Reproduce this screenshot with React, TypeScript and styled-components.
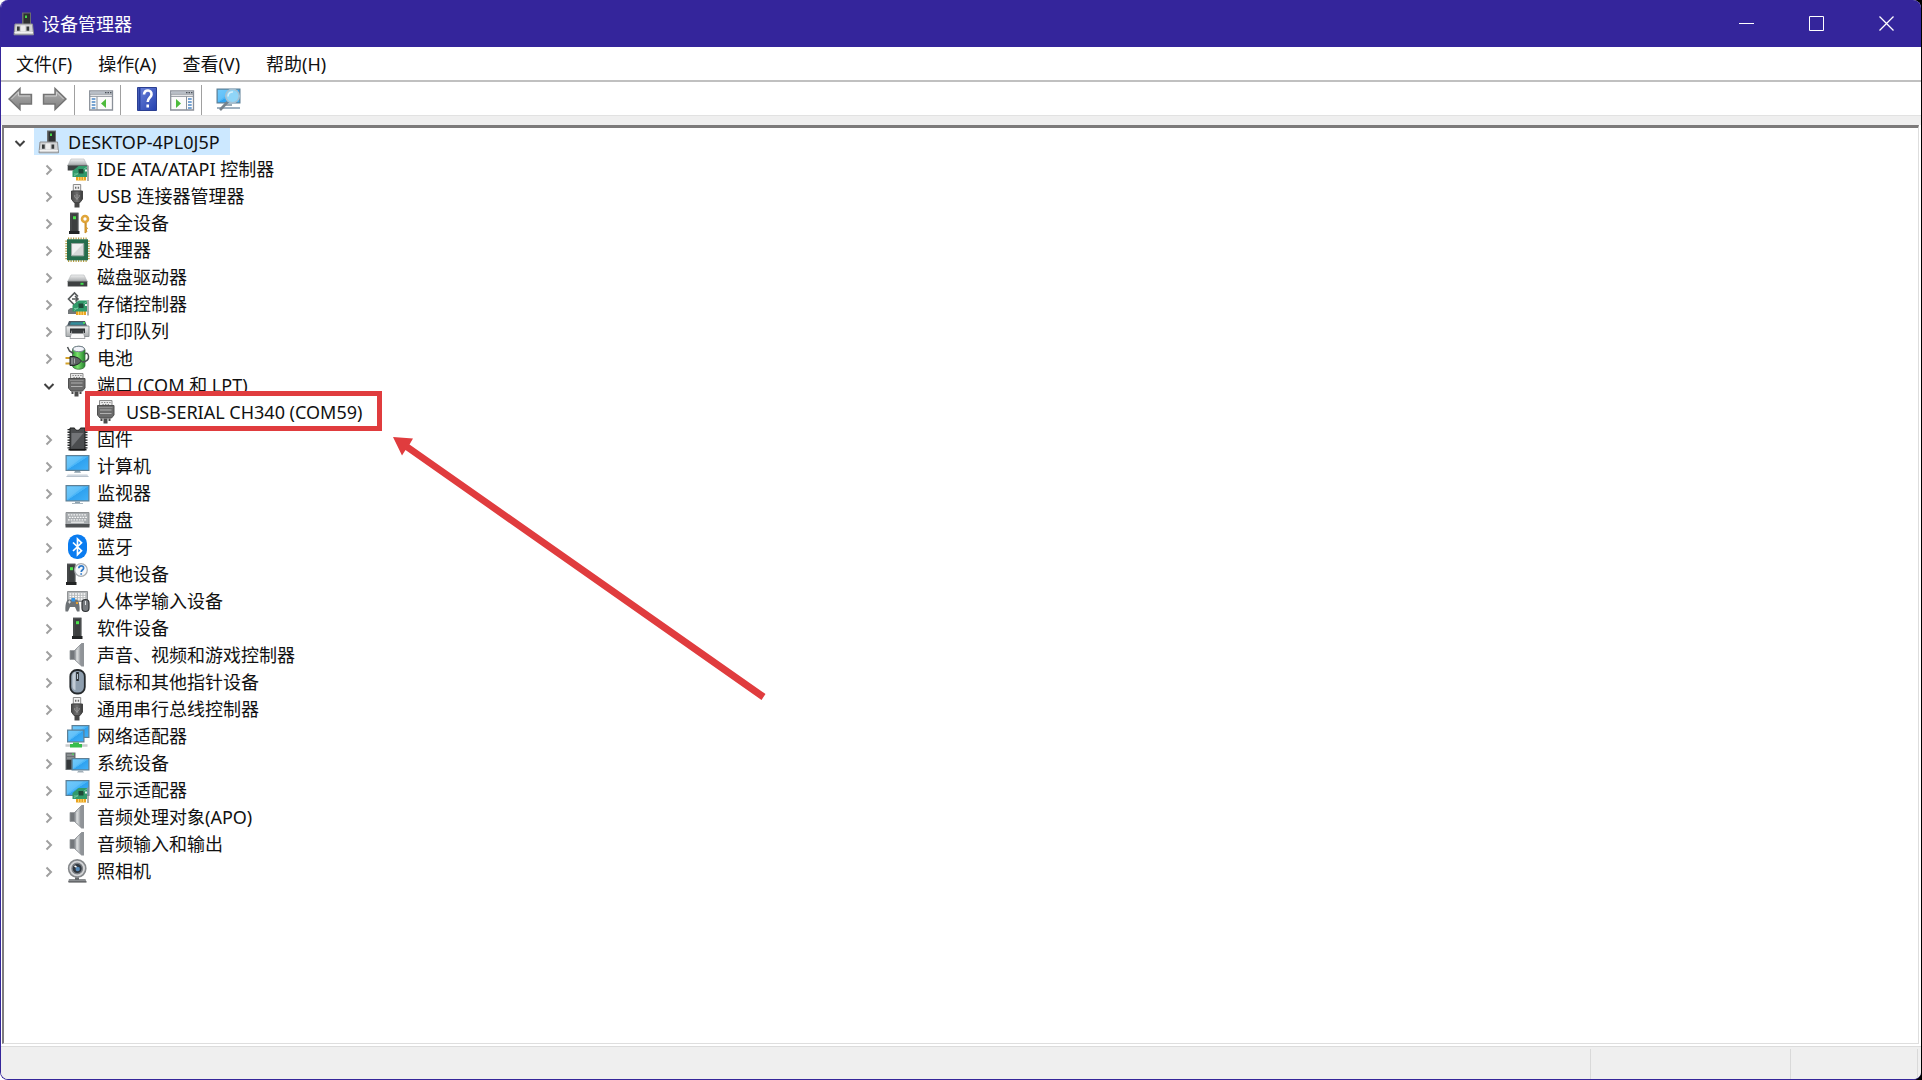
import React, { useState } from "react";
import styled, { createGlobalStyle } from "styled-components";

const GlobalStyle = createGlobalStyle`
  * { box-sizing: border-box; }
  body {
    margin: 0;
    background: linear-gradient(to right, #ffffff 50%, #000000 50%);
    font-family: "Noto Sans", "Noto Sans CJK SC", sans-serif;
    font-size: 18px;
    color: #111111;
  }
  button { font: inherit; color: inherit; }
`;

const Window = styled.div`
  display: flex;
  flex-direction: column;
  min-height: 100vh;
  margin-right: 1px;
  border-left: 1px solid #35269a;
  border-bottom: 1px solid #35269a;
  border-radius: 8px;
  background: #ffffff;
  overflow: hidden;
`;

const TitleBar = styled.header`
  display: flex;
  align-items: center;
  height: 47px;
  padding-left: 10px;
  background: #34259b;
  color: #ffffff;
`;

const Title = styled.h1`
  flex: 1;
  margin: 0 0 0 7px;
  font-size: 18px;
  line-height: 28px;
  font-weight: 400;
`;

const CaptionButton = styled.button`
  display: flex;
  align-items: center;
  justify-content: center;
  width: 70px;
  height: 47px;
  padding: 0;
  border: 0;
  background: transparent;
`;

const MenuBar = styled.nav`
  display: flex;
  align-items: center;
  height: 35px;
  padding-left: 2px;
  border-bottom: 2px solid #c0c0c0;
`;

const MenuButton = styled.button`
  padding: 1px 13px 0;
  border: 0;
  background: transparent;
  line-height: 28px;
`;

const ToolBar = styled.div`
  display: flex;
  align-items: center;
  height: 33px;
  padding-left: 1px;
`;

const ToolButton = styled.button`
  display: flex;
  align-items: center;
  justify-content: center;
  width: 35px;
  height: 30px;
  padding: 0;
  border: 0;
  background: transparent;
`;

const ToolDivider = styled.span`
  align-self: flex-end;
  width: 1px;
  height: 30px;
  margin: 0 8px 0 2px;
  background: #a0a0a0;
`;

const Gutter = styled.div`
  height: 10px;
  background: #efefef;
  border-top: 1px solid #e2e2e2;
`;

const TreePane = styled.main`
  flex: 1;
  margin: 0 2px 2px 1px;
  border-top: 3px solid #7c7a7a;
  border-left: 2px solid #7f7d80;
  border-right: 1px solid #dedede;
  border-bottom: 1px solid #dedede;
`;

const Branch = styled.ul`
  margin: 0;
  padding: 0;
  list-style: none;
`;

const Row = styled.div<{ $level: number }>`
  position: relative;
  display: flex;
  align-items: center;
  height: 27px;
  padding-left: ${(p) => 6 + p.$level * 29}px;
`;

const Expander = styled.button<{ $hidden?: boolean }>`
  display: flex;
  align-items: center;
  justify-content: center;
  width: 20px;
  height: 27px;
  margin-right: 4px;
  padding: 2px 0 0;
  border: 0;
  background: transparent;
  visibility: ${(p) => (p.$hidden ? "hidden" : "visible")};
`;

const Node = styled.span<{ $selected?: boolean }>`
  position: relative;
  display: flex;
  align-items: center;
  gap: 8px;
  height: 27px;
  padding: 0 10px 0 2px;
  line-height: 28px;
  white-space: nowrap;
  background: ${(p) => (p.$selected ? "#cce8ff" : "transparent")};
`;

const Label = styled.span`
  padding-top: 1px;
`;

const Icon = styled.svg`
  display: block;
  flex: none;
  width: 24px;
  height: 24px;
  overflow: visible;
`;

const HighlightBox = styled.span`
  position: absolute;
  z-index: 2;
  inset: -7px -10px -6px -7px;
  border: 5px solid #e03c3e;
  pointer-events: none;
`;

const Arrow = styled.svg`
  position: absolute;
  z-index: 2;
  top: 38px;
  left: 388px;
  width: 376px;
  height: 266px;
  pointer-events: none;
`;

const StatusBar = styled.footer`
  display: grid;
  grid-template-columns: 1fr 200px 127px;
  height: 33px;
  padding-right: 3px;
  border-top: 1px solid #dcdcdc;
  background: #efefef;
`;

const StatusCell = styled.div`
  margin-top: 2px;
  border-right: 1px solid #d9d9d9;
`;

const HiddenDefs = styled.svg`
  position: absolute;
  width: 0;
  height: 0;
`;

const Gradients = () => (
  <HiddenDefs aria-hidden="true">
    <defs>
      <linearGradient id="screen" x1="0" y1="0" x2="1" y2="1">
        <stop offset="0" stopColor="#5fc4fb" />
        <stop offset="0.5" stopColor="#4ab6f8" />
        <stop offset="0.52" stopColor="#2fa2f0" />
        <stop offset="1" stopColor="#41b1f8" />
      </linearGradient>
      <linearGradient id="metal" x1="0" y1="0" x2="0" y2="1">
        <stop offset="0" stopColor="#f0f1f1" />
        <stop offset="1" stopColor="#a9acae" />
      </linearGradient>
      <linearGradient id="dark" x1="0" y1="0" x2="1" y2="0">
        <stop offset="0" stopColor="#4a4a4a" />
        <stop offset="0.5" stopColor="#707070" />
        <stop offset="1" stopColor="#3a3a3a" />
      </linearGradient>
      <linearGradient id="cone" x1="0" y1="0" x2="1" y2="0">
        <stop offset="0" stopColor="#8b8f93" />
        <stop offset="0.5" stopColor="#cfd2d4" />
        <stop offset="1" stopColor="#7d8186" />
      </linearGradient>
      <linearGradient id="grayArrow" x1="0" y1="0" x2="0" y2="1">
        <stop offset="0" stopColor="#b4b4b4" />
        <stop offset="1" stopColor="#7d7d7d" />
      </linearGradient>
      <linearGradient id="help" x1="0" y1="0" x2="1" y2="1">
        <stop offset="0" stopColor="#6f86dc" />
        <stop offset="1" stopColor="#2340ae" />
      </linearGradient>
      <linearGradient id="cell" x1="0" y1="0" x2="1" y2="0">
        <stop offset="0" stopColor="#2f9d35" />
        <stop offset="0.4" stopColor="#7be06c" />
        <stop offset="1" stopColor="#23842c" />
      </linearGradient>
    </defs>
  </HiddenDefs>
);

const Board = ({ top = 9 }: { top?: number }) => (
  <g transform={`translate(0 ${top - 9})`}>
    <path d="M11 19h10v4.5H11z" fill="#e9a320" />
    <path d="M13.5 19.5v4M16 19.5v4M18.5 19.5v4" stroke="#fbd674" />
    <path d="M7.5 14l6-5H22v11H7.5z" fill="#319a6b" />
    <path d="M9 17h4M9 19l13-9" stroke="#6cc49a" />
    <path d="M13.5 12h5v4.5h-5z" fill="#1f4938" />
    <path d="M20 12.5h2v2h-2z" fill="#e8f3ee" />
    <path d="M23 8.5V24" stroke="#8d9190" strokeWidth="1.4" />
  </g>
);

const Tower = ({ x }: { x: number }) => (
  <g transform={`translate(${x} 0)`}>
    <path d="M1.5 2h8.500v18H1.500z" fill="#3d3f40" />
    <path d="M1.5 2h8.5" stroke="#606364" />
    <path d="M0.5 20h10.5v3H0.5z" fill="#222425" />
    <path d="M2.500 19.5V3M9.200 3v16.5" stroke="#545758" strokeWidth="0.8" />
    <path d="M4.5 5.2h3v3h-3z" fill="#4be34b" />
  </g>
);

const Screen = ({ x, y, w, h }: { x: number; y: number; w: number; h: number }) => (
  <>
    <rect x={x + 0.6} y={y + 0.6} width={w - 1.2} height={h - 1.2} fill="url(#screen)" stroke="#5d7f95" strokeWidth="1.2" />
    <path d={`M${x + 1.5} ${y + h - 2}L${x + w * 0.75} ${y + 1.5}H${x + 1.5}z`} fill="#ffffff" opacity="0.12" />
  </>
);

const Plug = ({ wide }: { wide?: boolean }) =>
  wide ? (
    <>
      <path d="M5.5 0.5h12.5v5H5.5z" fill="#e7e7e7" stroke="#8b8b8b" />
      <path d="M7.5 2.5h9M8.5 4.5h7" stroke="#777777" strokeDasharray="1.2 1.4" />
      <path d="M3.500 5.5h16.500v9.500l-2.500 3H6l-2.500-3z" fill="#6b6b6b" stroke="#4f4f4f" />
      <path d="M5 7.500h13.500" stroke="#8c8c8c" />
      <path d="M6 10h11.500M6 13.500h11.500" stroke="#b0b0b0" />
      <path d="M6.5 18.5h2V21h-2zM14.5 18.5h2V21h-2zM9.5 18.5h4v5h-4z" fill="#4c4c4c" />
    </>
  ) : (
    <>
      <path d="M8.3 0.5h7.4v6.5H8.3z" fill="#f1f1f1" stroke="#8c8c8c" />
      <path d="M10 2.8h1.4v2H10zM12.7 2.8h1.4v2h-1.4z" fill="#6c6c6c" />
      <path d="M6.500 7h11v8L15 18.500H9L6.500 15z" fill="url(#dark)" stroke="#444444" />
      <path d="M12 16v-6M9.8 11v2.2l2.2 1.5 2.2-2V11" stroke="#9b9b9b" fill="none" strokeWidth="0.9" />
      <path d="M9.5 18.5h5v5h-5z" fill="#464646" />
    </>
  );

const Drive = ({ y }: { y: number }) => (
  <g transform={`translate(0 ${y})`}>
    <path d="M6 0h13l3 6H3z" fill="url(#metal)" stroke="#b4b7b9" strokeWidth="0.6" />
    <path d="M2.7 6h19.6v5.5H2.7z" fill="#3e4142" />
    <path d="M2.7 6.4h19.6" stroke="#6e7172" />
    <path d="M15.5 7.8h3v2h-3z" fill="#3fe04c" />
  </g>
);

type Kind =
  | "pc" | "ide" | "usb" | "security" | "cpu" | "disk" | "storage" | "printer" | "battery" | "port"
  | "firmware" | "computer" | "monitor" | "keyboard" | "bluetooth" | "other" | "hid" | "software"
  | "sound" | "mouse" | "network" | "system" | "display" | "camera";

const drawings: Record<Kind, React.ReactNode> = {
  pc: (
    <>
      <path d="M11 .500h9v12h-9z" fill="#6a6d6e" />
      <path d="M12.500 1.500h6.500V12h-6.500z" fill="#2e3031" />
      <path d="M14 3.500h2v2.4h-2z" fill="#45d64a" />
      <path d="M4 12h17.500l1 10.800H3z" fill="#d2d3d4" stroke="#8e9092" />
      <path d="M3.500 20.500h18.500" stroke="#f2f2f2" />
      <path d="M6 14.500h2.700v4.300H6zM15.500 14.500h2.700v4.300h-2.700z" fill="#36393a" />
      <path d="M10 13.500h4.200v6H10z" fill="#eeeeee" />
    </>
  ),
  ide: (<><Drive y={2} /><Board top={9} /></>),
  usb: <Plug />,
  security: (
    <>
      <Tower x={3.5} />
      <circle cx="20" cy="8" r="3" fill="none" stroke="#e0a53a" strokeWidth="2.6" />
      <path d="M20 11.5V22l2-1.5-.8-1.6 1.3-1.4-1.3-1.6V12" fill="#e0a53a" stroke="#c58a25" strokeWidth="0.9" />
    </>
  ),
  cpu: (
    <>
      <path d="M3 0.5h19M3 23h19M1.3 2.5v19M23.7 2.5v19" stroke="#b79e45" strokeWidth="2" strokeDasharray="1.2 1.3" />
      <path d="M2 1.300h21v21H2z" fill="#256d4c" />
      <path d="M6.500 5.5h12.2v12.3H6.500z" fill="#d7dad9" stroke="#9ba8a1" />
      <path d="M7.200 17L18 6H7.200z" fill="#f0f2f1" />
    </>
  ),
  disk: <Drive y={10} />,
  storage: (
    <>
      <path d="M3 18l2.5-2h8v6H3z" fill="#737779" />
      <path d="M13 4.500L9.500 1 3.500 7l6 6 3-3M7 7h6M10 4l3 3-2.500 2.500" fill="none" stroke="#55595a" strokeWidth="1.6" />
      <Board top={8.5} />
    </>
  ),
  printer: (
    <>
      <path d="M4 2h16l2 5H2z" fill="#4b5a63" />
      <path d="M6 3.2h12l1 2.5H5z" fill="#328d9b" />
      <path d="M18 3h2v1.8h-2z" fill="#48e05c" />
      <path d="M1 7h23v10.500H1z" fill="url(#metal)" stroke="#8d9396" />
      <path d="M5 9.500h15v4.500H5z" fill="#2f3335" />
      <path d="M7 11.500h11l2 8H5z" fill="#f9f9f9" stroke="#8f9294" strokeWidth="0.8" />
      <path d="M7 11h11v3.500H7z" fill="#3a3e40" />
    </>
  ),
  battery: (
    <>
      <path d="M7.500 4c0-5 12.500-5 12.500 0v15.500c0 5-12.500 5-12.500 0z" fill="url(#cell)" stroke="#3b6e3e" strokeWidth="0.8" />
      <ellipse cx="13.7" cy="3" rx="5.8" ry="2.700" fill="#f1f3f8" stroke="#7b8394" />
      <path d="M2.5 1l2 4 4 2.500M17 16c5 0 7-3 6.500-6s-2-3.500-4-2" fill="none" stroke="#4b4f51" strokeWidth="1.5" />
      <path d="M0.5 12h5M0.500 17.500h5" stroke="#d4a129" strokeWidth="2" />
      <path d="M5 10.500h4l4.500 1.500 3 3-3 3-4.500 1.500H5z" fill="#5d6163" stroke="#25282a" />
      <path d="M7 12v6M9.5 12.500v5" stroke="#a7abad" />
    </>
  ),
  port: <Plug wide />,
  firmware: (
    <>
      <path d="M4 2v19.5M21 2v19.5" stroke="#27292a" strokeWidth="3" strokeDasharray="1.3 1.3" />
      <path d="M5 1h4.500c.5 3 5.500 3 6 0H20v22H5z" fill="#4b4d4f" stroke="#1d1e1f" />
      <path d="M6.500 20V6h12z" fill="#727477" />
      <path d="M3.500 22.700h18" stroke="#151515" strokeWidth="1.600" />
    </>
  ),
  computer: (
    <>
      <Screen x={0.5} y={1} w={24} h={16} />
      <path d="M10 17h5l1 1.800H9z" fill="#8ea1ad" />
      <path d="M3 20.500h19l2 2.500H1z" fill="#b8c3ce" />
      <path d="M2 21h21" stroke="#e8edf2" />
    </>
  ),
  monitor: (
    <>
      <Screen x={0.5} y={4} w={24} h={16.500} />
      <path d="M10 20.500h5V22H18v.800H7V22h3z" fill="#8ea1ad" />
    </>
  ),
  keyboard: (
    <>
      <path d="M1 4.500h23v13H1z" fill="#a9adb0" stroke="#8f9294" />
      <path d="M3 6.800h19M4 9.300h18M3 11.800h19" stroke="#f8f8f8" strokeWidth="1.300" strokeDasharray="1.700 1" />
      <path d="M6 14.200h13" stroke="#eeeeee" strokeWidth="1.200" />
      <path d="M.500 16h24v3.500H.500z" fill="#4e5153" />
    </>
  ),
  bluetooth: (
    <>
      <rect x="3" y="-0.500" width="19" height="24.500" rx="9" fill="#0a7cf0" />
      <path d="M8 7.500l8.500 8.200-4 4V4l4 3.800L8 16" fill="none" stroke="#ffffff" strokeWidth="1.700" />
    </>
  ),
  other: (
    <>
      <Tower x={0.5} />
      <circle cx="16" cy="8" r="6.300" fill="#f7f8fa" stroke="#a9adb1" strokeWidth="1.200" />
      <path d="M13.800 6.200c.200-3.100 5-3.100 4.800 0-.100 1.800-2.400 1.900-2.400 3.700M16.200 11.200v1.600" fill="none" stroke="#2f79c8" strokeWidth="1.700" />
    </>
  ),
  hid: (
    <>
      <path d="M2.500 2.500h20v10h-20z" fill="#b4b7b9" stroke="#909395" />
      <path d="M4.500 5h16M4.500 7.500h16M4.500 10h16" stroke="#ffffff" strokeWidth="1.300" strokeDasharray="1.800 1" />
      <path d="M3.500 10.500h8c3 1 3.500 8 3 12h-2.500l-2-4.500H5L3 22.500H.500C0 17 1 11.500 3.500 10.500z" fill="#6d7276" />
      <path d="M3 13h3M4.500 11.500v3" stroke="#d8dadb" />
      <path d="M6.500 9h3.500v3.500H6.500z" fill="#2f92e6" />
      <path d="M11 13h2v2h-2z" fill="#e6a02f" />
      <rect x="17" y="10.500" width="7" height="12" rx="3.500" fill="#75797d" stroke="#303335" strokeWidth="1.200" />
      <path d="M20.500 12v4" stroke="#e2e4e6" />
    </>
  ),
  software: <Tower x={6.5} />,
  sound: (
    <>
      <path d="M5 7.500h5v9H5z" fill="#73777b" stroke="#96999c" strokeWidth="0.800" />
      <path d="M9.500 7.500L16.500 .500V23L9.500 16.500z" fill="url(#cone)" stroke="#888c90" strokeWidth="0.800" />
      <path d="M16.500 0h2.500v23.500h-2.500z" fill="#8f9397" />
      <path d="M12 7v11" stroke="#e5e7e8" />
    </>
  ),
  mouse: (
    <>
      <rect x="5.300" y="0" width="14.500" height="23.500" rx="6.500" fill="#8e9eae" stroke="#25292c" strokeWidth="1.800" />
      <path d="M7.500 5c1-2.500 2-3 3-3v18c-2 0-3-2-3-4z" fill="#c2ccd6" />
      <path d="M12.500 2v9" stroke="#25292c" strokeWidth="2.600" />
      <path d="M12.500 4v5" stroke="#b8c7d5" />
    </>
  ),
  network: (
    <>
      <Screen x={6.500} y={1} w={18} h={13} />
      <Screen x={2} y={5.500} w={17.500} h={13} />
      <path d="M8 18.500h6V20h3v3.500H5V20h3z" fill="#36bd4b" />
      <path d="M0.500 21.500H5M17 21.500h5.500" stroke="#c9cccd" strokeWidth="2.500" />
    </>
  ),
  system: (
    <>
      <path d="M0.500 1.500h10V19H.500z" fill="#6b7073" />
      <path d="M2 4h7M2 7h7" stroke="#a9adaf" />
      <path d="M7 2.500h2v1.300H7z" fill="#4cd95b" />
      <path d="M1.500 9h5v9h-5z" fill="#34383a" />
      <Screen x={6.500} y={7} w={18} h={12.500} />
      <path d="M13.500 19.500h4l1.500 2h-7z" fill="#a3afb8" />
    </>
  ),
  display: (<><Screen x={0.5} y={2} w={24} h={16} /><Board top={10} /></>),
  camera: (
    <>
      <path d="M10 17h4v3h6.500l1 3H3l1-3h6z" fill="#8b8e91" />
      <path d="M3.500 23h18M10 20h4" stroke="#404345" />
      <circle cx="12.200" cy="9.500" r="8.600" fill="#d3d4d6" stroke="#85888b" strokeWidth="1.600" />
      <circle cx="12.200" cy="9.500" r="5.200" fill="#30363e" stroke="#7b7f84" strokeWidth="1.400" />
      <circle cx="12.700" cy="10" r="2.200" fill="#5589b9" />
      <path d="M9.500 7l2 1" stroke="#ffffff" strokeWidth="1.500" />
    </>
  ),
};

const DeviceIcon = ({ kind }: { kind: Kind }) => (
  <Icon viewBox="0 0 24 24" aria-hidden="true">{drawings[kind]}</Icon>
);

const Chevron = ({ open }: { open: boolean }) => (
  <svg width="12" height="12" viewBox="0 0 12 12" fill="none" strokeWidth="2" aria-hidden="true">
    {open ? <path d="M1.500 4L6 8.500 10.500 4" stroke="#404040" /> : <path d="M3.500 1.500L8 6 3.500 10.500" stroke="#a0a0a0" />}
  </svg>
);

interface Device {
  name: string;
  icon: Kind;
  children?: Device[];
  open?: boolean;
  marked?: boolean;
  leaf?: boolean;
}

const computer: Device = {
  name: "DESKTOP-4PL0J5P",
  icon: "pc",
  open: true,
  children: [
    { name: "IDE ATA/ATAPI 控制器", icon: "ide" },
    { name: "USB 连接器管理器", icon: "usb" },
    { name: "安全设备", icon: "security" },
    { name: "处理器", icon: "cpu" },
    { name: "磁盘驱动器", icon: "disk" },
    { name: "存储控制器", icon: "storage" },
    { name: "打印队列", icon: "printer" },
    { name: "电池", icon: "battery" },
    {
      name: "端口 (COM 和 LPT)",
      icon: "port",
      open: true,
      children: [{ name: "USB-SERIAL CH340 (COM59)", icon: "port", leaf: true, marked: true }],
    },
    { name: "固件", icon: "firmware" },
    { name: "计算机", icon: "computer" },
    { name: "监视器", icon: "monitor" },
    { name: "键盘", icon: "keyboard" },
    { name: "蓝牙", icon: "bluetooth" },
    { name: "其他设备", icon: "other" },
    { name: "人体学输入设备", icon: "hid" },
    { name: "软件设备", icon: "software" },
    { name: "声音、视频和游戏控制器", icon: "sound" },
    { name: "鼠标和其他指针设备", icon: "mouse" },
    { name: "通用串行总线控制器", icon: "usb" },
    { name: "网络适配器", icon: "network" },
    { name: "系统设备", icon: "system" },
    { name: "显示适配器", icon: "display" },
    { name: "音频处理对象(APO)", icon: "sound" },
    { name: "音频输入和输出", icon: "sound" },
    { name: "照相机", icon: "camera" },
  ],
};

const TreeItem = ({ device, level }: { device: Device; level: number }) => {
  const [open, setOpen] = useState(Boolean(device.open));
  return (
    <li role="treeitem" aria-expanded={device.leaf ? undefined : open} aria-selected={level === 0}>
      <Row $level={level}>
        <Expander type="button" $hidden={device.leaf} aria-label={device.name} onClick={() => setOpen(!open)}>
          <Chevron open={open} />
        </Expander>
        <Node $selected={level === 0}>
          <DeviceIcon kind={device.icon} />
          <Label>{device.name}</Label>
          {device.marked && <HighlightBox />}
        </Node>
        {device.marked && (
          <Arrow viewBox="0 0 376 266" aria-hidden="true">
            <path d="M1 1L21 2.500 17.500 8.500 373.500 258 369.500 264 13.500 14 10 19.500z" fill="#e03c3e" />
          </Arrow>
        )}
      </Row>
      {open && device.children && (
        <Branch role="group">
          {device.children.map((child) => (
            <TreeItem key={child.name} device={child} level={level + 1} />
          ))}
        </Branch>
      )}
    </li>
  );
};

const BackArrow = ({ flip }: { flip?: boolean }) => (
  <Icon viewBox="0 0 24 24" aria-hidden="true">
    <path
      transform={flip ? "matrix(-1 0 0 1 24 0)" : undefined}
      d="M1 12L12 1.500V7.500H23.500V17H12V22.500z"
      fill="url(#grayArrow)"
      stroke="#747474"
      strokeWidth="1.400"
    />
    <path
      transform={flip ? "matrix(-1 0 0 1 24 0)" : undefined}
      d="M3.500 12L10.500 5v4H22"
      fill="none"
      stroke="#cfcfcf"
    />
  </Icon>
);

const PanelIcon = ({ right }: { right?: boolean }) => (
  <Icon viewBox="0 0 24 24" aria-hidden="true">
    <path d="M.700 4h22.800v19H.700z" fill="#fbfbfb" stroke="#8a9099" strokeWidth="1.300" />
    <path d="M1.300 4.500h21.600v2.200H1.300z" fill="#b9bfc8" />
    <path d="M1 9.300h22.500M1 7.200h22.500" stroke="#8a9099" />
    <path d="M16 5.600h1.500M18.500 5.600H20M21 5.600h1.500" stroke="#4b5058" strokeWidth="1.400" />
    {right ? (
      <>
        <path d="M16.500 9.500V23" stroke="#8a9099" />
        <path d="M18 12h3.700M18 15h3.700M18 18h3.700M18 21h3.700" stroke="#4c86c5" strokeWidth="1.400" />
        <path d="M6 12l5 4.500L6 21z" fill="#4dbb3c" />
      </>
    ) : (
      <>
        <path d="M8 9.500V23" stroke="#8a9099" />
        <path d="M2.700 12h3.700M2.700 15h3.700M2.700 18h3.700M2.700 21h3.700" stroke="#4c86c5" strokeWidth="1.400" />
        <path d="M17 12l-5 4.500 5 4.500z" fill="#4dbb3c" />
      </>
    )}
  </Icon>
);

const HelpIcon = () => (
  <Icon viewBox="0 0 24 24" aria-hidden="true">
    <path d="M2.500 .500h19v23h-19z" fill="url(#help)" stroke="#2b3f92" />
    <path d="M4.500 1v22.500" stroke="#2740a0" strokeWidth="2" />
    <path d="M9 7.500c.500-5.500 8-5 7.500 0-.300 3.300-3.800 3.300-3.800 7.500M12.700 17.500v3" fill="none" stroke="#ffffff" strokeWidth="2.600" />
  </Icon>
);

const ScanIcon = () => (
  <Icon viewBox="0 0 24 24" aria-hidden="true">
    <Screen x={0.5} y={1.500} w={24} h={15} />
    <path d="M9 17h7v2H9z" fill="#9aaab6" />
    <path d="M1 21h23" stroke="#9fb0bf" strokeWidth="2" />
    <path d="M11.500 15L4 23" stroke="#76828c" strokeWidth="2.600" />
    <circle cx="16.500" cy="9" r="6.800" fill="#8fd5f8" stroke="#a4c0d2" strokeWidth="1.600" />
    <path d="M12 9.500c0-3 2.500-5 5-4.500" fill="none" stroke="#d7f1fd" strokeWidth="1.500" />
  </Icon>
);

const menus = ["文件(F)", "操作(A)", "查看(V)", "帮助(H)"];

export default function App() {
  return (
    <>
      <GlobalStyle />
      <Gradients />
      <Window>
        <TitleBar>
          <DeviceIcon kind="pc" />
          <Title>设备管理器</Title>
          <CaptionButton type="button" aria-label="最小化">
            <svg width="15" height="15"><path d="M0 7.500h15" stroke="#fff" /></svg>
          </CaptionButton>
          <CaptionButton type="button" aria-label="最大化">
            <svg width="15" height="15"><path d="M.500 .500h14v14H.500z" stroke="#fff" fill="none" /></svg>
          </CaptionButton>
          <CaptionButton type="button" aria-label="关闭">
            <svg width="15" height="15"><path d="M.500 .500l14 14M14.500 .500l-14 14" stroke="#fff" strokeWidth="1.300" /></svg>
          </CaptionButton>
        </TitleBar>
        <MenuBar>
          {menus.map((m) => (
            <MenuButton type="button" key={m}>{m}</MenuButton>
          ))}
        </MenuBar>
        <ToolBar>
          <ToolButton type="button" aria-label="后退"><BackArrow /></ToolButton>
          <ToolButton type="button" aria-label="前进"><BackArrow flip /></ToolButton>
          <ToolDivider />
          <ToolButton type="button" aria-label="显示/隐藏控制台树"><PanelIcon /></ToolButton>
          <ToolDivider />
          <ToolButton type="button" aria-label="帮助"><HelpIcon /></ToolButton>
          <ToolButton type="button" aria-label="显示/隐藏操作窗格"><PanelIcon right /></ToolButton>
          <ToolDivider />
          <ToolButton type="button" aria-label="扫描检测硬件改动"><ScanIcon /></ToolButton>
        </ToolBar>
        <Gutter />
        <TreePane>
          <Branch role="tree">
            <TreeItem device={computer} level={0} />
          </Branch>
        </TreePane>
        <StatusBar>
          <StatusCell />
          <StatusCell />
          <StatusCell />
        </StatusBar>
      </Window>
    </>
  );
}
